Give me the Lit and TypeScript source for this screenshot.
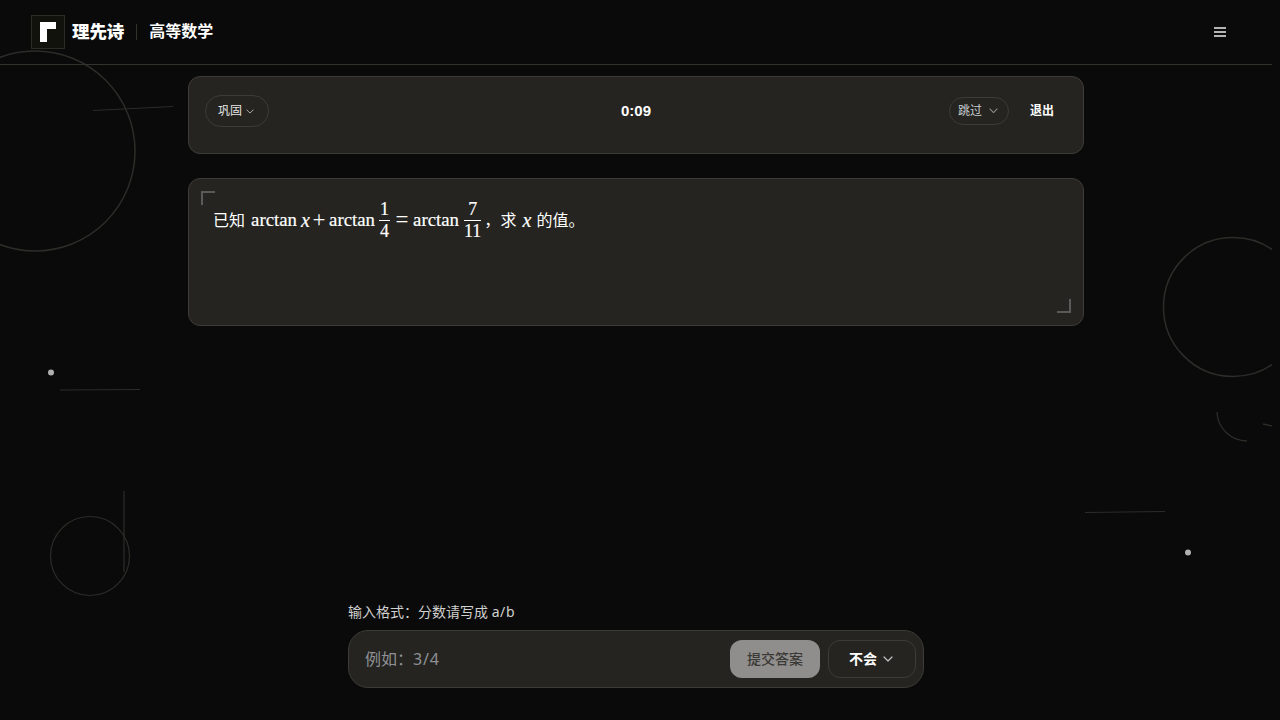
import { LitElement, html, css, svg } from "lit";
import { customElement } from "lit/decorators.js";

const chevron = (cls: string) => html`<svg class=${cls} viewBox="0 0 10 6" fill="none" stroke="currentColor" stroke-width="1.2" stroke-linecap="round" stroke-linejoin="round"><path d="M1 1l4 4 4-4"/></svg>`;

@customElement("app-root")
export class AppRoot extends LitElement {
  static styles = css`
    :host { display: block; width: 1280px; height: 720px; overflow: hidden; position: relative; background: #0a0a0a; color: #fff;
      font-family: "Noto Sans", "Noto Sans CJK SC", sans-serif; }
    * { box-sizing: border-box; }
    .decor { position: absolute; left: 0; top: 0; width: 1272px; height: 720px; pointer-events: none; }
    .page { position: relative; width: 1272px; height: 720px; display: flex; flex-direction: column; }
    header { height: 65px; flex: none; border-bottom: 1px solid #33332e; display: flex; align-items: center; padding: 0 32px 1px 31px; }
    .logo { width: 34px; height: 34px; background: #12120c; border: 1px solid #2c2b25; display: flex; align-items: center; justify-content: center; }
    .logo svg { width: 16px; height: 20px; display: block; }
    .brand { margin-left: 7px; font-size: 17.5px; font-weight: 900; letter-spacing: -0.1px; line-height: 24px; padding-bottom: 2px; }
    .divider { width: 1px; height: 16px; background: #33332e; margin: 0 12px; }
    .subject { font-size: 16px; font-weight: 700; line-height: 24px; padding-bottom: 2px; }
    .menu { margin-left: auto; margin-right: 14px; width: 12px; display: flex; flex-direction: column; gap: 2px; }
    .menu i { display: block; height: 2px; background: #b4b4b4; }
    main { flex: 1; display: flex; flex-direction: column; align-items: center; padding-top: 11px; }
    .card { width: 896px; background: #252420; border: 1px solid #3c3b37; border-radius: 12px; }
    .top { height: 78px; padding: 18px 16px 0; display: grid; grid-template-columns: 1fr auto 1fr; align-items: start; }
    .left, .right { display: flex; align-items: center; height: 32px; }
    .right { justify-content: flex-end; gap: 9px; }
    .pill { display: inline-flex; align-items: center; border: 1px solid #3c3b37; border-radius: 999px; font-size: 12px; color: #e4e4e4; padding-bottom: 2px; }
    .pill.a { width: 64px; height: 32px; padding-left: 12px; gap: 4px; }
    .pill.b { width: 60px; height: 28px; padding-left: 8px; gap: 7px; color: #c8ccd0; }
    .chev-s { width: 8px; height: 5px; color: #b0b0b0; margin-top: 2px; }
    .chev-m { width: 9px; height: 5.5px; color: #8a8a88; margin-top: 2px; }
    .timer { font-size: 15px; font-weight: 700; line-height: 32px; font-family: "Liberation Sans", sans-serif; }
    .quit { font-size: 12px; font-weight: 700; padding: 0 13px 1px 12px; line-height: 28px; }
    .q { position: relative; margin-top: 24px; height: 148px; padding: 21px 24px 0; }
    .corner { position: absolute; width: 14px; height: 14px; border: 0 solid #5a5a58; }
    .tl { left: 12px; top: 12px; border-width: 2px 0 0 2px; }
    .br { right: 12px; bottom: 12px; border-width: 0 2px 2px 0; }
    .math { display: flex; align-items: center; height: 40px; font-size: 16px; line-height: 24px; white-space: nowrap; }
    .m { font-family: "Liberation Serif", serif; font-size: 18.8px; display: block; text-align: center; -webkit-text-stroke: 0.2px #fff; flex: none; }
    .fn { width: 46px; }
    .var { font-style: italic; font-size: 20px; width: 9px; }
    .op { font-size: 23px; width: 14px; -webkit-text-stroke: 0; }
    .cjk { flex: none; }
    .ml2 { margin-left: 2px; } .ml3 { margin-left: 3px; } .ml4 { margin-left: 4px; } .ml5 { margin-left: 5px; } .ml6 { margin-left: 6px; }
    .frac { display: inline-flex; flex-direction: column; align-items: center; font-family: "Liberation Serif", serif; font-size: 18px; line-height: 19px; -webkit-text-stroke: 0.2px #fff; flex: none; }
    .frac span { display: block; width: 100%; min-width: 11px; text-align: center; }
    .frac span:first-child { border-bottom: 1px solid #fff; padding-bottom: 1px; }
    .frac span:last-child { padding-top: 1px; }
    .spacer { flex: 1; }
    .hint { width: 576px; font-size: 14px; line-height: 20px; color: #d0d0ce; margin-bottom: 8px; }
    .hint b { font-weight: 400; letter-spacing: 0.6px; }
    .input { width: 576px; height: 58px; margin-bottom: 32px; background: #252420; border: 1px solid #3c3b37; border-radius: 20px; display: flex; align-items: center; padding: 0 7px 0 16px; }
    .ph { flex: 1; font-size: 16px; color: #8f9196; padding-bottom: 2px; }
    .ph b { font-weight: 400; letter-spacing: 0.8px; }
    .btn { height: 38px; border-radius: 12px; display: flex; align-items: center; justify-content: center; font-size: 14px; }
    .submit { width: 90px; background: #8f8e8c; color: #3a3936; font-weight: 500; padding-bottom: 2px; }
    .no { width: 88px; margin-left: 8px; border: 1px solid #3c3b37; font-weight: 700; gap: 6px; padding: 0 2px 2px 0; }
    .chev-b { width: 10px; height: 6px; color: #c0c0c0; margin-top: 2px; }
  `;

  private decor() {
    const c = "#2c2c29";
    return svg`
      <circle cx="35" cy="151" r="100" stroke=${c} fill="none" stroke-width="1.5"/>
      <line x1="93" y1="110.5" x2="173" y2="106.5" stroke=${c} stroke-width="1.2"/>
      <circle cx="51" cy="372.5" r="3" fill="#b0b0b0"/>
      <line x1="60" y1="390" x2="140" y2="389.5" stroke=${c} stroke-width="1.2"/>
      <circle cx="90" cy="556" r="39.5" stroke=${c} fill="none" stroke-width="1.2"/>
      <line x1="124" y1="491" x2="124" y2="572" stroke=${c} stroke-width="1.2"/>
      <circle cx="1233" cy="307" r="69.5" stroke=${c} fill="none" stroke-width="1.5"/>
      <path d="M1217 412a30 30 0 0 0 30 29" stroke=${c} fill="none" stroke-width="1.3"/>
      <line x1="1263" y1="424" x2="1272" y2="426" stroke=${c} stroke-width="1.3"/>
      <line x1="1085" y1="512.5" x2="1165" y2="511.5" stroke=${c} stroke-width="1.2"/>
      <circle cx="1188" cy="552.5" r="3" fill="#b0b0b0"/>
    `;
  }

  render() {
    return html`
      <svg class="decor" viewBox="0 0 1272 720">${this.decor()}</svg>
      <div class="page">
        <header>
          <div class="logo"><svg viewBox="0 0 16 20"><path fill="#fff" d="M0 0h16v7H7v13H0z"/></svg></div>
          <div class="brand">理先诗</div>
          <div class="divider"></div>
          <div class="subject">高等数学</div>
          <div class="menu"><i></i><i></i><i></i></div>
        </header>
        <main>
          <section class="card top">
            <div class="left"><div class="pill a">巩固${chevron("chev-s")}</div></div>
            <div class="timer">0:09</div>
            <div class="right">
              <div class="pill b">跳过${chevron("chev-m")}</div>
              <div class="quit">退出</div>
            </div>
          </section>
          <section class="card q">
            <i class="corner tl"></i><i class="corner br"></i>
            <div class="math">
              <span class="cjk">已知</span>
              <span class="m fn ml6">arctan</span>
              <span class="m var ml4">x</span>
              <span class="m op ml2">+</span>
              <span class="m fn ml3">arctan</span>
              <span class="frac ml4"><span>1</span><span>4</span></span>
              <span class="m op ml5">=</span>
              <span class="m fn ml4">arctan</span>
              <span class="frac ml5"><span>7</span><span>11</span></span>
              <span class="cjk ml3">，</span>
              <span class="cjk">求</span>
              <span class="m var ml6">x</span>
              <span class="cjk ml5">的值。</span>
            </div>
          </section>
          <div class="spacer"></div>
          <div class="hint">输入格式：分数请写成 <b>a/b</b></div>
          <div class="input">
            <div class="ph">例如：<b>3/4</b></div>
            <div class="btn submit">提交答案</div>
            <div class="btn no">不会${chevron("chev-b")}</div>
          </div>
        </main>
      </div>
    `;
  }
}
